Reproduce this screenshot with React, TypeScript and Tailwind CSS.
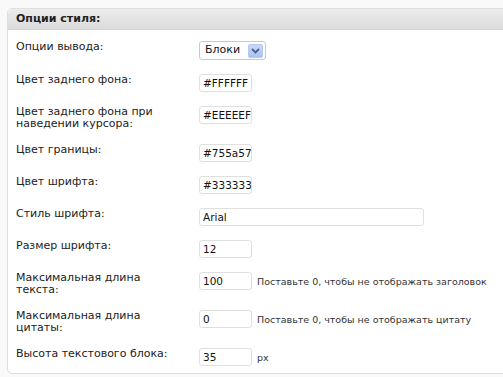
import React from "react";

const font = { fontFamily: '"DejaVu Sans", Verdana, sans-serif' };

function TextBox({ value, wide }: { value: string; wide?: boolean }) {
  return (
    <input
      readOnly
      value={value}
      className={`${wide ? "w-[225px]" : "w-[53px]"} h-[18px] border border-[#dfdfdf] rounded-[3px] bg-white pl-[3px] pr-0 text-[10.5px] text-[#111] outline-none`}
      style={font}
    />
  );
}

function Row({
  label,
  children,
  hint,
}: {
  label: React.ReactNode;
  children: React.ReactNode;
  hint?: string;
}) {
  return (
    <div className="flex items-start py-[7px]">
      <div className="w-[183px] shrink-0 text-[11px] leading-[12px] text-[#222]">{label}</div>
      <div className="flex items-center">
        {children}
        {hint && <span className="ml-[5px] mt-[2px] text-[9.5px] text-[#333]">{hint}</span>}
      </div>
    </div>
  );
}

export default function App() {
  return (
    <div className="w-[503px] h-[377px] overflow-hidden bg-[#f9f9f9] pt-[8px] pl-[7px]" style={font}>
      <div className="w-[520px] h-[366px] bg-white border border-[#dfdfdf] rounded-tl-[5px] rounded-bl-[5px]">
        <div className="h-[21px] flex items-center pl-[8px] border-b border-[#d4d4d4] rounded-tl-[5px] bg-gradient-to-b from-[#ececec] to-[#dcdcdc] text-[11px] font-bold text-[#222]">
          Опции стиля:
        </div>
        <div className="pl-[8px] pt-[4px]">
          <Row label="Опции вывода:">
            <div className="w-[67px] h-[19px] border border-[#c9c9c9] rounded-[3px] bg-white flex items-center justify-between pl-[5px] pr-[2px] text-[11px] text-[#111]">
              <span>Блоки</span>
              <span className="w-[15px] h-[14px] rounded-[2px] bg-gradient-to-b from-[#c9d8fa] to-[#aac2f2] border border-[#b6c8ef] flex items-center justify-center">
                <svg width="9" height="6" viewBox="0 0 9 6">
                  <path d="M1 1 L4.5 4.5 L8 1" stroke="#4d6185" strokeWidth="1.8" fill="none" />
                </svg>
              </span>
            </div>
          </Row>
          <Row label="Цвет заднего фона:">
            <TextBox value="#FFFFFF" />
          </Row>
          <Row
            label={
              <>
                Цвет заднего фона при
                <br />
                наведении курсора:
              </>
            }
          >
            <TextBox value="#EEEEEF" />
          </Row>
          <Row label="Цвет границы:">
            <TextBox value="#755a57" />
          </Row>
          <Row label="Цвет шрифта:">
            <TextBox value="#333333" />
          </Row>
          <Row label="Стиль шрифта:">
            <TextBox value="Arial" wide />
          </Row>
          <Row label="Размер шрифта:">
            <TextBox value="12" />
          </Row>
          <Row
            label={
              <>
                Максимальная длина
                <br />
                текста:
              </>
            }
            hint="Поставьте 0, чтобы не отображать заголовок"
          >
            <TextBox value="100" />
          </Row>
          <Row
            label={
              <>
                Максимальная длина
                <br />
                цитаты:
              </>
            }
            hint="Поставьте 0, чтобы не отображать цитату"
          >
            <TextBox value="0" />
          </Row>
          <Row label="Высота текстового блока:" hint="px">
            <TextBox value="35" />
          </Row>
        </div>
      </div>
    </div>
  );
}
